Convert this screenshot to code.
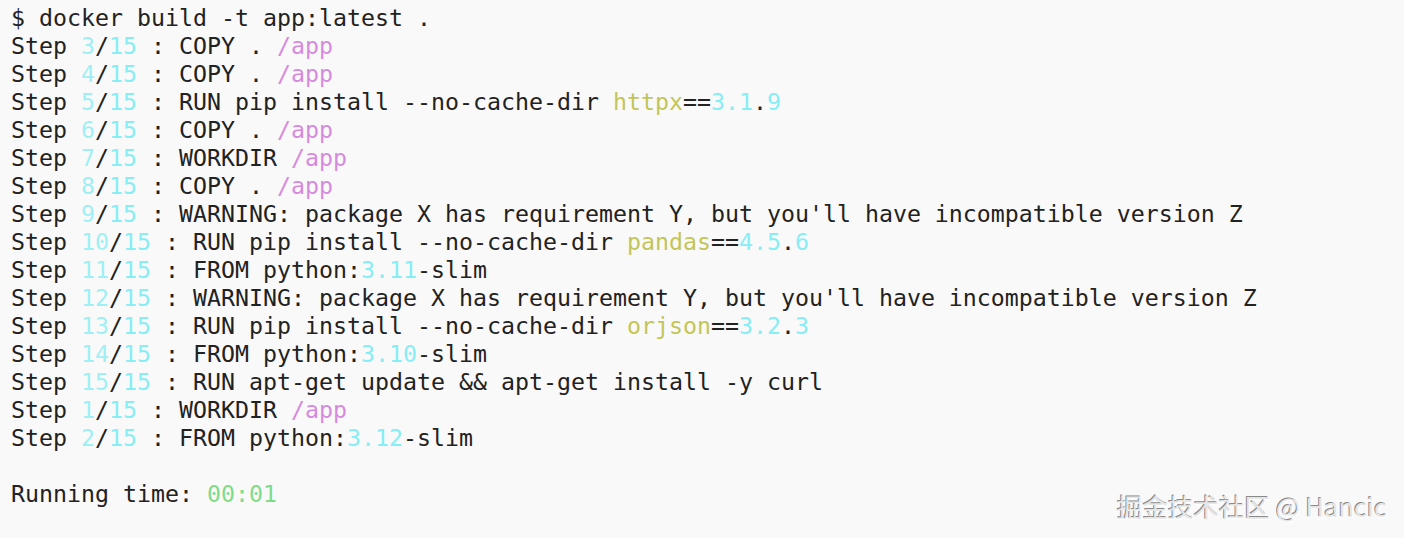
import React from "react"

type Seg = [string, string?]

const C = "text-[#86eef5]"
const N = "text-[#9ff0f5]"
const P = "text-[#d68ade]"
const Y = "text-[#c2c55a]"

const step = (n: number, rest: Seg[]): Seg[] => [
  ["Step "],
  [String(n), N],
  ["/"],
  ["15", C],
  [" : "],
  ...rest,
]

const copy: Seg[] = [["COPY . "], ["/app", P]]
const warn: Seg[] = [["WARNING: package X has requirement Y, but you'll have incompatible version Z"]]
const pip = (pkg: string, a: string, b: string): Seg[] => [
  ["RUN pip install --no-cache-dir "],
  [pkg, Y],
  ["=="],
  [a, C],
  ["."],
  [b, C],
]
const from = (v: string): Seg[] => [["FROM python:"], [v, C], ["-slim"]]

const lines: Seg[][] = [
  [["$ docker build -t app:latest ."]],
  step(3, copy),
  step(4, copy),
  step(5, pip("httpx", "3.1", "9")),
  step(6, copy),
  step(7, [["WORKDIR "], ["/app", P]]),
  step(8, copy),
  step(9, warn),
  step(10, pip("pandas", "4.5", "6")),
  step(11, from("3.11")),
  step(12, warn),
  step(13, pip("orjson", "3.2", "3")),
  step(14, from("3.10")),
  step(15, [["RUN apt-get update && apt-get install -y curl"]]),
  step(1, [["WORKDIR "], ["/app", P]]),
  step(2, from("3.12")),
  [[""]],
  [["Running time: "], ["00:01", "text-[#7ddc8c]"]],
]

export default function App() {
  return (
    <div className="relative w-[1404px] h-[538px] overflow-hidden bg-[#f9f9f9] text-[#222222]">
      <pre className="pl-[11px] pt-[4px] font-['DejaVu_Sans_Mono',monospace] text-[23.25px] leading-[28px]">
        {lines.map((segs, i) => (
          <div key={i} className="h-[28px] whitespace-pre">
            {segs.map(([t, cls], j) => (
              <span key={j} className={cls}>
                {t}
              </span>
            ))}
          </div>
        ))}
      </pre>
      <div
        className="absolute right-[17px] top-[489px] font-['Noto_Sans_CJK_SC','Noto_Sans',sans-serif] text-[25.5px] leading-[34px] text-[#e6e6e6] [text-shadow:-1px_-1px_0_#8a8a8a,1px_1px_0_#ffffff]"
      >
        掘金技术社区 @ Hancic
      </div>
    </div>
  )
}
